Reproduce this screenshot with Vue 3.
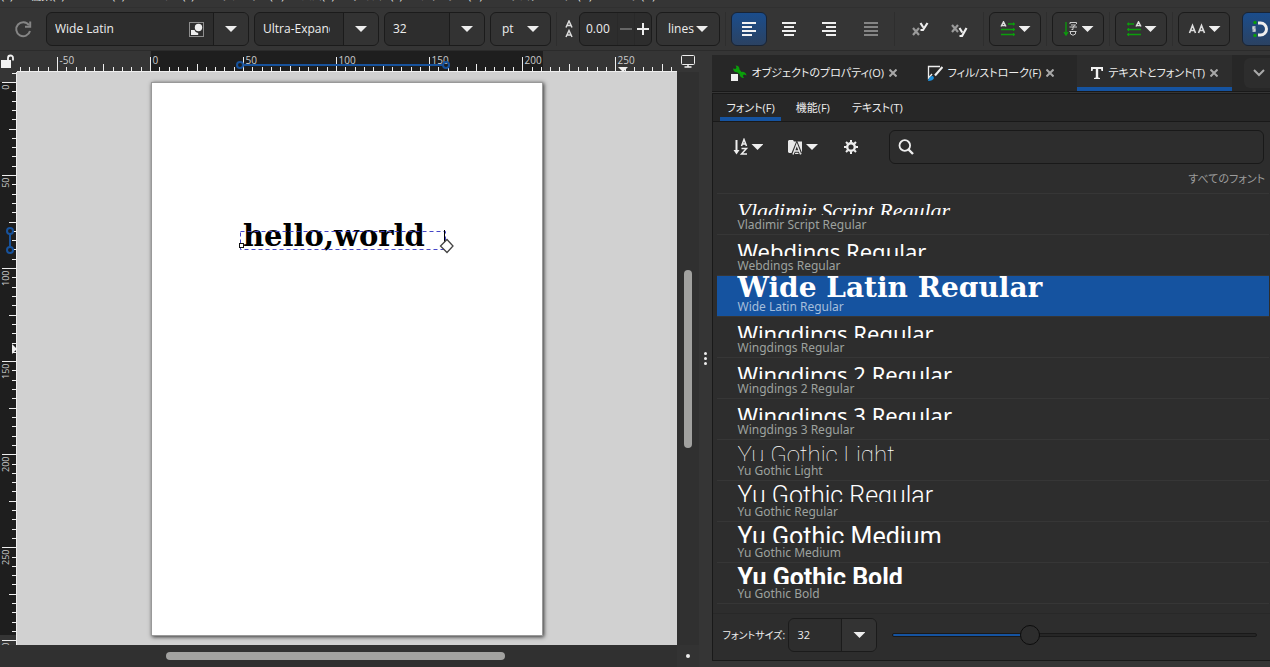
<script setup>
import { ref, computed } from 'vue'

const menus = ['(F)', '編集(E)', 'ビュー(V)', 'レイヤー(L)', 'オブジェクト(O)', 'パス(P)', 'テキスト(T)', 'フィルター(N)', 'エクステンション(N)', 'ヘルプ(H)']

const family = ref('Wide Latin')
const styleName = ref('Ultra-Expanded')
const size = ref('32')
const spacing = ref('0.00')
const panelSize = ref('32')
const slider = ref(37)
const query = ref('')
const sliderFill = computed(() => ({ '--fill': slider.value + '%' }))

const fonts = [
  { name: 'Vladimir Script Regular', kind: 'script' },
  { name: 'Webdings Regular', kind: 'sans' },
  { name: 'Wide Latin Regular', kind: 'wide', selected: true },
  { name: 'Wingdings Regular', kind: 'sans' },
  { name: 'Wingdings 2 Regular', kind: 'sans' },
  { name: 'Wingdings 3 Regular', kind: 'sans' },
  { name: 'Yu Gothic Light', kind: 'light' },
  { name: 'Yu Gothic Regular', kind: 'demi' },
  { name: 'Yu Gothic Medium', kind: 'medium' },
  { name: 'Yu Gothic Bold', kind: 'bold' }
]

// Ruler marks every 5 mm
const scale = 1.861
function marks(origin, from, to) {
  const out = []
  for (let mm = from; mm <= to; mm += 5) {
    out.push({
      mm,
      pos: Math.round(origin + mm * scale) + 0.5,
      len: mm % 50 === 0 ? 14 : mm % 25 === 0 ? 7 : 4
    })
  }
  return out
}
const hMarks = marks(133, -70, 285)
const vMarks = marks(10, -5, 300)
</script>

<template>
  <div class="app">
    <nav class="menubar" aria-label="メニュー">
      <span v-for="m in menus" :key="m">{{ m }}</span>
    </nav>

    <header class="toolbar">
      <button class="flat reload" aria-label="更新">
        <svg width="20" height="20" viewBox="0 0 20 20" fill="none" stroke="#858585" stroke-width="2"><path d="M16 6.2A7 7 0 1 0 17 12" /><path d="M17.2 2.5v5.2h-5.2" /></svg>
      </button>

      <div class="combo family">
        <input v-model="family" aria-label="フォントファミリー" />
        <button class="inner" aria-label="選択">
          <svg width="15" height="15" viewBox="0 0 15 15"><rect x=".5" y=".5" width="14" height="14" fill="none" stroke="#eee" stroke-dasharray="1 1" /><circle cx="9.5" cy="5.500" r="3.700" fill="#eee" /><path d="M2 8h3.500q.5 2.500 3.700 3V13H2z" fill="#eee" /></svg>
        </button>
        <button class="drop" aria-label="開く"><i class="caret"></i></button>
      </div>
      <div class="combo style">
        <input v-model="styleName" aria-label="スタイル" />
        <button class="drop" aria-label="開く"><i class="caret"></i></button>
      </div>
      <div class="combo size">
        <input v-model="size" aria-label="サイズ" />
        <button class="drop" aria-label="開く"><i class="caret"></i></button>
      </div>
      <div class="picker pt"><select aria-label="単位"><option>pt</option></select><i class="caret"></i></div>
      <span class="sep"></span>
      <svg class="spacing-icon" width="14" height="18" viewBox="0 0 14 18" fill="none" stroke="#ddd" stroke-width="1.500"><path d="M4 7.500 7 1l3 6.500M5 5.500h4M4 17l3-6.500L10 17M5 15h4" /></svg>
      <div class="combo spin">
        <input v-model="spacing" aria-label="行の間隔" />
        <button class="step dim" aria-label="減らす"><svg width="12" height="12" viewBox="0 0 12 12"><path d="M0 6h12" stroke="#666" stroke-width="2" /></svg></button>
        <button class="step" aria-label="増やす"><svg width="12" height="12" viewBox="0 0 12 12"><path d="M0 6h12M6 0v12" stroke="#eee" stroke-width="2" /></svg></button>
      </div>
      <div class="picker lines"><select aria-label="行の単位"><option>lines</option></select><i class="caret"></i></div>
      <span class="sep"></span>
      <button class="align on" aria-label="左揃え"><svg width="14" height="14" viewBox="0 0 14 14" stroke="#f2f2f2" stroke-width="2"><path d="M0 1h14M0 5h10M0 9h14M0 13h10" /></svg></button>
      <button class="align" aria-label="中央揃え"><svg width="14" height="14" viewBox="0 0 14 14" stroke="#eee" stroke-width="2"><path d="M0 1h14M2 5h10M0 9h14M2 13h10" /></svg></button>
      <button class="align" aria-label="右揃え"><svg width="14" height="14" viewBox="0 0 14 14" stroke="#eee" stroke-width="2"><path d="M0 1h14M4 5h10M0 9h14M4 13h10" /></svg></button>
      <button class="align last" aria-label="両端揃え"><svg width="14" height="14" viewBox="0 0 14 14" stroke="#858585" stroke-width="2"><path d="M0 1h14M0 5h14M0 9h14M0 13h14" /></svg></button>
      <span class="sep"></span>
      <button class="script-btn" aria-label="上付き"><svg width="18" height="16" viewBox="0 0 18 16" fill="none" stroke-width="2.200"><path d="M2 7l6 7M8 7l-6 7" stroke="#9a9a9a" /><path d="M9.500 2l2.800 4.500M16.500 2l-4.500 7H9.500" stroke="#eee" /></svg></button>
      <button class="script-btn" aria-label="下付き"><svg width="18" height="16" viewBox="0 0 18 16" fill="none" stroke-width="2.200"><path d="M2 4l6 7M8 4l-6 7" stroke="#9a9a9a" /><path d="M9.500 7l2.800 4.500M16.500 7l-4.500 8H9.500" stroke="#eee" /></svg></button>
      <span class="sep"></span>
      <button class="mode" aria-label="書字方向">
        <svg width="16" height="16" viewBox="0 0 16 16" fill="none" stroke="#0b9e0b" stroke-width="1.400"><path d="M1 5.500 3.500.8 6 5.500M2 4.500h3" stroke="#ddd" /><path d="M8 3h7M1 8.500h14M1 13.500h14" /><path d="M13.500 1.500v3M13.500 7v3M13.500 12v3" stroke-width="1" /></svg><i class="caret"></i>
      </button>
      <span class="sep"></span>
      <button class="mode" aria-label="文字の向き">
        <svg width="16" height="16" viewBox="0 0 16 16" fill="none" stroke="#ccc"><path d="M3 1v12M1 11l2 3 2-3" stroke="#0b9e0b" stroke-width="1.300" /><path d="M7 3V1.500h6.500V3M8 4h4.500L10 6v2.500H8.500M6.500 6H14M7.500 10.500h5M7.500 10.500v2.500q2.500 2.500 5 0v-2.500M6.500 10.500h7" /></svg><i class="caret"></i>
      </button>
      <span class="sep"></span>
      <button class="mode" aria-label="テキストの方向">
        <svg width="16" height="16" viewBox="0 0 16 16" fill="none" stroke="#0b9e0b" stroke-width="1.400"><path d="M10 5.500 12.500.8 15 5.500M11 4.500h3" stroke="#ddd" /><path d="M1 3h7M1 8.500h14M1 13.500h14" /><path d="M2.500 1.500v3M2.500 7v3M2.500 12v3" stroke-width="1" /></svg><i class="caret"></i>
      </button>
      <span class="sep"></span>
      <button class="mode" aria-label="カーニング">
        <svg width="18" height="16" viewBox="0 0 18 16" fill="none" stroke="#ddd" stroke-width="1.600"><path d="M1.500 12 4.500 4.500 7.500 12M2.500 9.500h4M10.500 12l3-7.500 3 7.500M11.500 9.500h4" /></svg><i class="caret"></i>
      </button>
      <button class="align on snap" aria-label="スナップ">
        <svg width="18" height="18" viewBox="0 0 18 18" fill="none"><path d="M7 3h2.500a6 6 0 0 1 0 12H7" stroke="#eee" stroke-width="3" /><circle cx="4" cy="2.500" r="1.700" fill="#0b9e0b" /><circle cx="4" cy="15.500" r="1.700" fill="#0b9e0b" /><path d="M4.500 7H2v2h2v2H1.500" stroke="#ddd" stroke-width="1.300" /></svg>
      </button>
    </header>

    <main class="work">
      <section class="desk">
        <button class="flat lock" aria-label="ガイドをロック"><svg width="14" height="16" viewBox="0 0 14 16"><rect x="1" y="6" width="10" height="8" fill="#f2f2f2" /><path d="M8 6V4a2.500 2.500 0 0 1 5 0V6.500" fill="none" stroke="#f2f2f2" stroke-width="1.800" /></svg></button>
        <svg class="hruler" height="22" width="100%">
          <rect x="134" width="392" height="22" fill="#1e1e1e" />
          <path v-for="m in hMarks" :key="m.mm" :d="`M${m.pos} ${20 - m.len}V20`" stroke="#eee" />
          <template v-for="m in hMarks" :key="'t' + m.mm"><text v-if="m.mm % 50 === 0" :x="m.pos + 2" y="13">{{ m.mm }}</text></template>
          <path d="M0 20.500H1000" stroke="#eee" />
          <g fill="none" stroke="#17529c" stroke-width="2"><path d="M227 14H425" /><circle cx="223" cy="14" r="3" /><circle cx="429" cy="14" r="3" /></g>
          <path d="M601 16h10l-5 5z" fill="#eee" />
        </svg>
        <button class="flat view" aria-label="表示"><svg width="14" height="13" viewBox="0 0 14 13" fill="none" stroke="#eee"><rect x=".5" y=".5" width="13" height="9" rx="1" /><path d="M7 10v2M3.500 12h7" stroke-width="1.500" /></svg></button>

        <svg class="vruler" width="17" height="100%">
          <rect y="10" width="17" height="553" fill="#1e1e1e" />
          <path v-for="m in vMarks" :key="m.mm" :d="`M${16 - m.len} ${m.pos}H16`" stroke="#eee" />
          <template v-for="m in vMarks" :key="'t' + m.mm"><text v-if="m.mm % 50 === 0 && m.mm >= 0" text-anchor="end" :transform="`translate(9 ${m.pos + 2}) rotate(-90)`">{{ m.mm }}</text></template>
          <path d="M16.500 0V1000" stroke="#eee" />
          <g fill="none" stroke="#17529c" stroke-width="2"><path d="M10 162v13" /><circle cx="10" cy="159" r="3" /><circle cx="10" cy="178" r="3" /></g>
          <path d="M12 272v10l5-5z" fill="#eee" />
        </svg>

        <div class="canvas">
          <div class="page">
            <svg width="390" height="552" viewBox="0 0 390 552">
              <text class="artwork" x="91" y="163">hello,world</text>
              <rect x="88.500" y="148.500" width="205" height="18" fill="none" stroke="#4646c8" stroke-dasharray="4 3" />
              <rect x="87.500" y="160.500" width="4" height="4" fill="#fff" stroke="#111" />
              <path d="M292.500 147v16" stroke="#000" />
              <path d="M295 156.500 301 163l-6 6.500-6.500-6.500z" fill="#fff" stroke="#444" stroke-width="1.300" />
            </svg>
          </div>
        </div>
        <div class="vscroll"><span></span></div>
        <div class="hscroll"><span></span></div>
        <div class="dot"><i></i></div>
      </section>

      <div class="handle" aria-hidden="true"><i></i><i></i><i></i></div>

      <aside class="dock">
        <div class="tabs" role="tablist">
          <div class="tab">
            <button role="tab"><svg width="16" height="16" viewBox="0 0 16 16"><path d="M2 3.500 4.500 4l1-1.500L4.500.500a4 4 0 0 1 4 4L10.500 7a4 4 0 0 1 5 3.500L13 9.500l-1.200 1.200 1.200 2.300a4 4 0 0 1-4.500-4L6 7.200A4 4 0 0 1 2 3.500z" fill="#0b9e0b" /><rect x="0" y="9" width="7" height="7" fill="#f0f0f0" /></svg>オブジェクトのプロパティ(O)</button>
            <button class="close" aria-label="閉じる"><svg width="8" height="8" viewBox="0 0 8 8"><path d="M.5.5l7 7M7.500.5l-7 7" stroke="#a8a8a8" stroke-width="2" /></svg></button>
          </div>
          <div class="tab second">
            <button role="tab"><svg width="16" height="16" viewBox="0 0 16 16" fill="none"><path d="M13 1.500H1.500V13L5 9" stroke="#eee" stroke-width="1.300" /><path d="M15.500 2 8 10.500" stroke="#eee" stroke-width="2.200" /><path d="M1 16q1-5 5-5l1 2q-1 3-6 3z" fill="#1e90dc" /></svg>フィル/ストローク(F)</button>
            <button class="close" aria-label="閉じる"><svg width="8" height="8" viewBox="0 0 8 8"><path d="M.5.5l7 7M7.500.5l-7 7" stroke="#a8a8a8" stroke-width="2" /></svg></button>
          </div>
          <div class="tab active">
            <button role="tab" aria-selected="true"><svg width="14" height="14" viewBox="0 0 14 14"><path d="M1 1h12v4h-1.500L11 3H8.200v8.500L10 12v1H4v-1l1.800-.5V3H3L2.500 5H1z" fill="#f2f2f2" /></svg>テキストとフォント(T)</button>
            <button class="close" aria-label="閉じる"><svg width="8" height="8" viewBox="0 0 8 8"><path d="M.5.5l7 7M7.500.5l-7 7" stroke="#a8a8a8" stroke-width="2" /></svg></button>
          </div>
          <button class="more" aria-label="その他"><svg width="12" height="8" viewBox="0 0 12 8"><path d="M1 1l5 5 5-5" fill="none" stroke="#aaa" stroke-width="2" /></svg></button>
        </div>

        <div class="sheet">
          <div class="subtabs" role="tablist">
            <button role="tab" class="active" aria-selected="true">フォント(F)</button>
            <button role="tab">機能(F)</button>
            <button role="tab">テキスト(T)</button>
          </div>

          <div class="filters">
            <button class="flat sort" aria-label="並べ替え"><svg width="16" height="18" viewBox="0 0 16 18" fill="none" stroke="#eee" stroke-width="1.500"><path d="M3.500 2v11" stroke-width="2" /><path d="M.5 12h6l-3 4.500z" fill="#eee" stroke="none" /><path d="M8.500 8 11 1.500 13.500 8M9.500 6h3M8.500 10.500h5l-5 5.500h5.500" /></svg><i class="caret"></i></button>
            <button class="flat group" aria-label="コレクション"><svg width="17" height="16" viewBox="0 0 17 16"><path d="M1 2l1-1h4l1 1.500h8V15H7l-1-1H2l-1-1z" fill="#e8e8e8" /><path d="M6 15 9.800 5.500l3.800 9.500M7.500 12h4.700" fill="none" stroke="#2d2d2d" stroke-width="3.400" /><path d="M6 15.500 9.800 5.500l3.800 10M7.500 12h4.700" fill="none" stroke="#e8e8e8" stroke-width="1.400" /></svg><i class="caret"></i></button>
            <button class="flat gear" aria-label="設定"><svg width="14" height="14" viewBox="0 0 14 14" fill="none" stroke="#eee"><circle cx="7" cy="7" r="3.800" stroke-width="2.400" /><path d="M7 0v2.500M7 11.500V14M0 7h2.500M11.500 7H14M2 2l1.800 1.800M10.200 10.200 12 12M12 2l-1.800 1.800M3.800 10.200 2 12" stroke-width="2" /></svg></button>
            <label class="search">
              <svg width="16" height="16" viewBox="0 0 16 16" fill="none" stroke="#eee"><circle cx="6.800" cy="6.500" r="5.300" stroke-width="1.800" /><path d="M10.500 10.500 15 15" stroke-width="2.400" /></svg>
              <input v-model="query" type="text" aria-label="フォントを検索" />
            </label>
          </div>
          <p class="count">すべてのフォント</p>

          <ul class="fonts" role="listbox" aria-label="フォント">
            <li v-for="f in fonts" :key="f.name" role="option" :aria-selected="!!f.selected" :class="{ selected: f.selected }">
              <div class="preview" :class="f.kind">{{ f.name }}</div>
              <div class="name">{{ f.name }}</div>
            </li>
          </ul>

          <div class="sizing">
            <label for="panel-size">フォントサイズ:</label>
            <div class="combo psize">
              <input id="panel-size" v-model="panelSize" />
              <button class="drop" aria-label="開く"><i class="caret"></i></button>
            </div>
            <input v-model="slider" class="slider" type="range" min="0" max="100" :style="sliderFill" aria-label="フォントサイズ" />
          </div>
        </div>
      </aside>
    </main>
  </div>
</template>

<style>
body { background: #353535; }
</style>

<style scoped>
.app {
  height: 100vh;
  display: flex;
  flex-direction: column;
  overflow: hidden;
  background: #353535;
  color: #eee;
  font: 12px/16px "Open Sans", "Noto Sans CJK JP", sans-serif;
  font-feature-settings: "palt";
}
*, *::before, *::after { box-sizing: border-box; }
button, input, select {
  font: inherit;
  font-feature-settings: inherit;
  color: inherit;
  background: none;
  border: 0;
  padding: 0;
  margin: 0;
  outline: 0;
}
button { display: flex; align-items: center; justify-content: center; }
svg { display: block; flex: none; }
.caret {
  width: 12px;
  height: 6px;
  flex: none;
  background: #eee;
  clip-path: polygon(0 0, 100% 0, 50% 100%);
}

.menubar {
  flex: none;
  height: 8px;
  display: flex;
  align-items: flex-end;
  gap: 17px;
  overflow: hidden;
  padding: 0 0 3px 1px;
  border-bottom: 1px solid #303030;
  font-size: 11px;
  white-space: nowrap;
}
.menubar span { height: 16px; }

.toolbar {
  flex: none;
  height: 43px;
  display: flex;
  align-items: center;
  padding: 0 0 0 12px;
  overflow: hidden;
  border-bottom: 1px solid #2b2b2b;
}
.toolbar > * { flex: none; }
.reload { width: 22px; margin-right: 12px; }
.combo {
  display: flex;
  height: 34px;
  border: 1px solid #1b1b1b;
  border-radius: 6px;
  background: #2d2d2d;
  overflow: hidden;
}
.combo input { flex: 1; min-width: 0; padding: 0 0 0 8px; }
.combo .drop { width: 35px; border-left: 1px solid #1b1b1b; background: #333; flex: none; }
.combo .inner { width: 34px; }
.family { width: 203px; margin-right: 5px; }
.style { width: 125px; margin-right: 5px; }
.style input { flex: none; width: 75px; margin-right: 13px; }
.size { width: 101px; margin-right: 5px; }
.picker {
  position: relative;
  height: 34px;
  border: 1px solid #1b1b1b;
  border-radius: 6px;
  background: #333;
}
.picker select { appearance: none; width: 100%; height: 100%; padding-left: 11px; }
.picker .caret { position: absolute; right: 11px; top: 13px; pointer-events: none; }
.pt { width: 61px; }
.lines { width: 64px; margin-left: 4px; }
.sep { width: 1px; height: 34px; background: #2e2e2e; margin: 0 5px; }
.spacing-icon { margin-right: 3px; }
.spin { width: 73px; }
.spin input { padding-left: 6px; }
.spin .step { width: 17px; border-left: 1px solid #292929; }
.align { width: 36px; height: 34px; border-radius: 6px; margin-right: 4px; }
.align.last { margin-right: 0; margin-left: 2px; }
.align.on { border: 1px solid #182436; background: linear-gradient(#1b4d8c, #2b4262); }
.script-btn { width: 39px; height: 34px; }
.mode {
  width: 52px;
  height: 34px;
  gap: 3px;
  border: 1px solid #1b1b1b;
  border-radius: 6px;
  background: #333;
}
.align.snap { margin-left: 12px; }

.work { flex: 1; min-height: 0; display: flex; }
.desk {
  flex: 1;
  min-width: 0;
  display: grid;
  grid-template: 21px minmax(0, 1fr) 22px / 17px minmax(0, 1fr) 22px;
}
.hruler, .vruler { overflow: hidden; fill: #ccc; font-size: 10px; }
.hruler { height: 21px; }
.vruler { height: 100%; font-size: 9px; }
.lock { justify-content: flex-start; }
.canvas { position: relative; overflow: hidden; background: #d1d1d1; }
.page {
  position: absolute;
  left: 134px;
  top: 10px;
  width: 392px;
  height: 554px;
  border: 1px solid #999;
  background: #fff;
  box-shadow: 1px 1px 4px #333;
}
.artwork { font: bold 29px "DejaVu Serif", serif; fill: #000; }
.vscroll, .hscroll { background: #303030; }
.vscroll span {
  display: block;
  width: 8px;
  height: 31%;
  margin: 198px auto 0 7px;
  border-radius: 4px;
  background: #a2a2a0;
}
.hscroll { grid-column: 1 / 3; padding-top: 7px; }
.hscroll span { display: block; width: 50%; height: 8px; margin-left: 166px; border-radius: 4px; background: #a2a2a0; }
.dot { display: flex; align-items: center; justify-content: center; background: #333; }
.dot i { width: 4px; height: 4px; border-radius: 2px; background: #eee; }

.handle { width: 13px; flex: none; display: flex; flex-direction: column; align-items: center; justify-content: center; gap: 2px; padding-bottom: 2px; }
.handle i { width: 3px; height: 3px; border-radius: 2px; background: #eee; }

.dock { flex: 0 0 43.9%; min-width: 0; display: flex; flex-direction: column; padding: 4px 0 6px; }
.tabs { flex: none; height: 37px; display: flex; overflow: hidden; background: #272727; border-bottom: 1px solid #191919; font-size: 11px; }
.tab { display: flex; align-items: center; gap: 5px; flex: none; width: 196px; padding-left: 19px; white-space: nowrap; }
.tab > button:first-child { gap: 4px; }
.tab.second { width: 169px; }
.tab.active { width: 155px; padding-left: 13px; background: #2d2d2d; border-bottom: 4px solid #1553a0; padding-top: 4px; }
.more { flex: none; width: 36px; height: 30px; margin: 3px 0 0 12px; border-radius: 6px; background: #2d2d2d; padding-right: 6px; }
.sheet {
  flex: 1;
  min-height: 0;
  margin-top: 1px;
  display: flex;
  flex-direction: column;
  background: #2d2d2d;
  border: 1px solid #191919;
  border-right: 0;
}
.subtabs { flex: none; height: 28px; display: flex; gap: 8px; padding-left: 7px; background: #272727; border-bottom: 1px solid #191919; font-size: 11px; }
.subtabs button { padding: 0 6px; border-bottom: 4px solid transparent; border-top: 4px solid transparent; height: 27px; }
.subtabs button + button { padding: 0 7px; }
.subtabs .active { border-bottom-color: #1553a0; }
.filters { display: flex; align-items: center; height: 34px; margin: 8px 6px 0 18px; flex: none; }
.filters .flat { gap: 2px; }
.sort, .group { width: 34px; height: 34px; }
.sort { margin-right: 20px; }
.group { margin-right: 20px; }
.gear { width: 24px; margin-right: 26px; height: 34px; }
.search { flex: 1; display: flex; align-items: center; height: 34px; padding: 0 8px; gap: 8px; border: 1px solid #191919; border-radius: 6px; }
.search input { flex: 1; min-width: 0; height: 100%; }
.count { flex: none; margin: 7px 5px 6px 0; text-align: right; font-size: 11px; color: #9c9c9c; }
.fonts { flex: none; list-style: none; margin: 0 1px 0 4px; padding: 0; border-top: 1px solid #363636; }
.fonts li { height: 41px; padding-left: 20px; border-bottom: 1px solid #363636; white-space: nowrap; overflow: hidden; }
.preview { height: 21px; overflow: hidden; color: #fff; font: 22px/32px "Noto Sans", sans-serif; }
.preview.script { font: italic 22px/34px "Liberation Serif", serif; }
.preview.wide { font: bold 28px/23px "DejaVu Serif", serif; }
.preview.light, .preview.demi, .preview.medium, .preview.bold { font: 300 25px/30px Roboto, sans-serif; }
.preview.light { font-size: 24px; font-weight: 100; }
.preview.medium { font-weight: 400; }
.preview.bold { font-weight: 700; }
.name { font: 12px/20px "Noto Sans", sans-serif; color: #9da29f; }
.selected { background: #1553a0; }
.selected .name { color: #a5bedb; }
.sizing { flex: none; display: flex; align-items: center; margin-top: 9px; padding: 4px 13px 0 9px; border-top: 1px solid #282828; }
.sizing label { width: 66px; white-space: nowrap; font-size: 10px; }
.psize { flex: none; width: 89px; font-size: 11px; }
.slider {
  appearance: none;
  flex: 1;
  min-width: 0;
  height: 22px;
  margin-left: 15px;
}
.slider::-webkit-slider-runnable-track {
  height: 4px;
  border: 1px solid #191919;
  border-radius: 2px;
  background: linear-gradient(to right, #1553a0 var(--fill), #262626 var(--fill));
}
.slider::-webkit-slider-thumb {
  appearance: none;
  width: 20px;
  height: 20px;
  margin-top: -9px;
  border: 1px solid #0c0c0c;
  border-radius: 50%;
  background: #2d2d2d;
}
</style>
